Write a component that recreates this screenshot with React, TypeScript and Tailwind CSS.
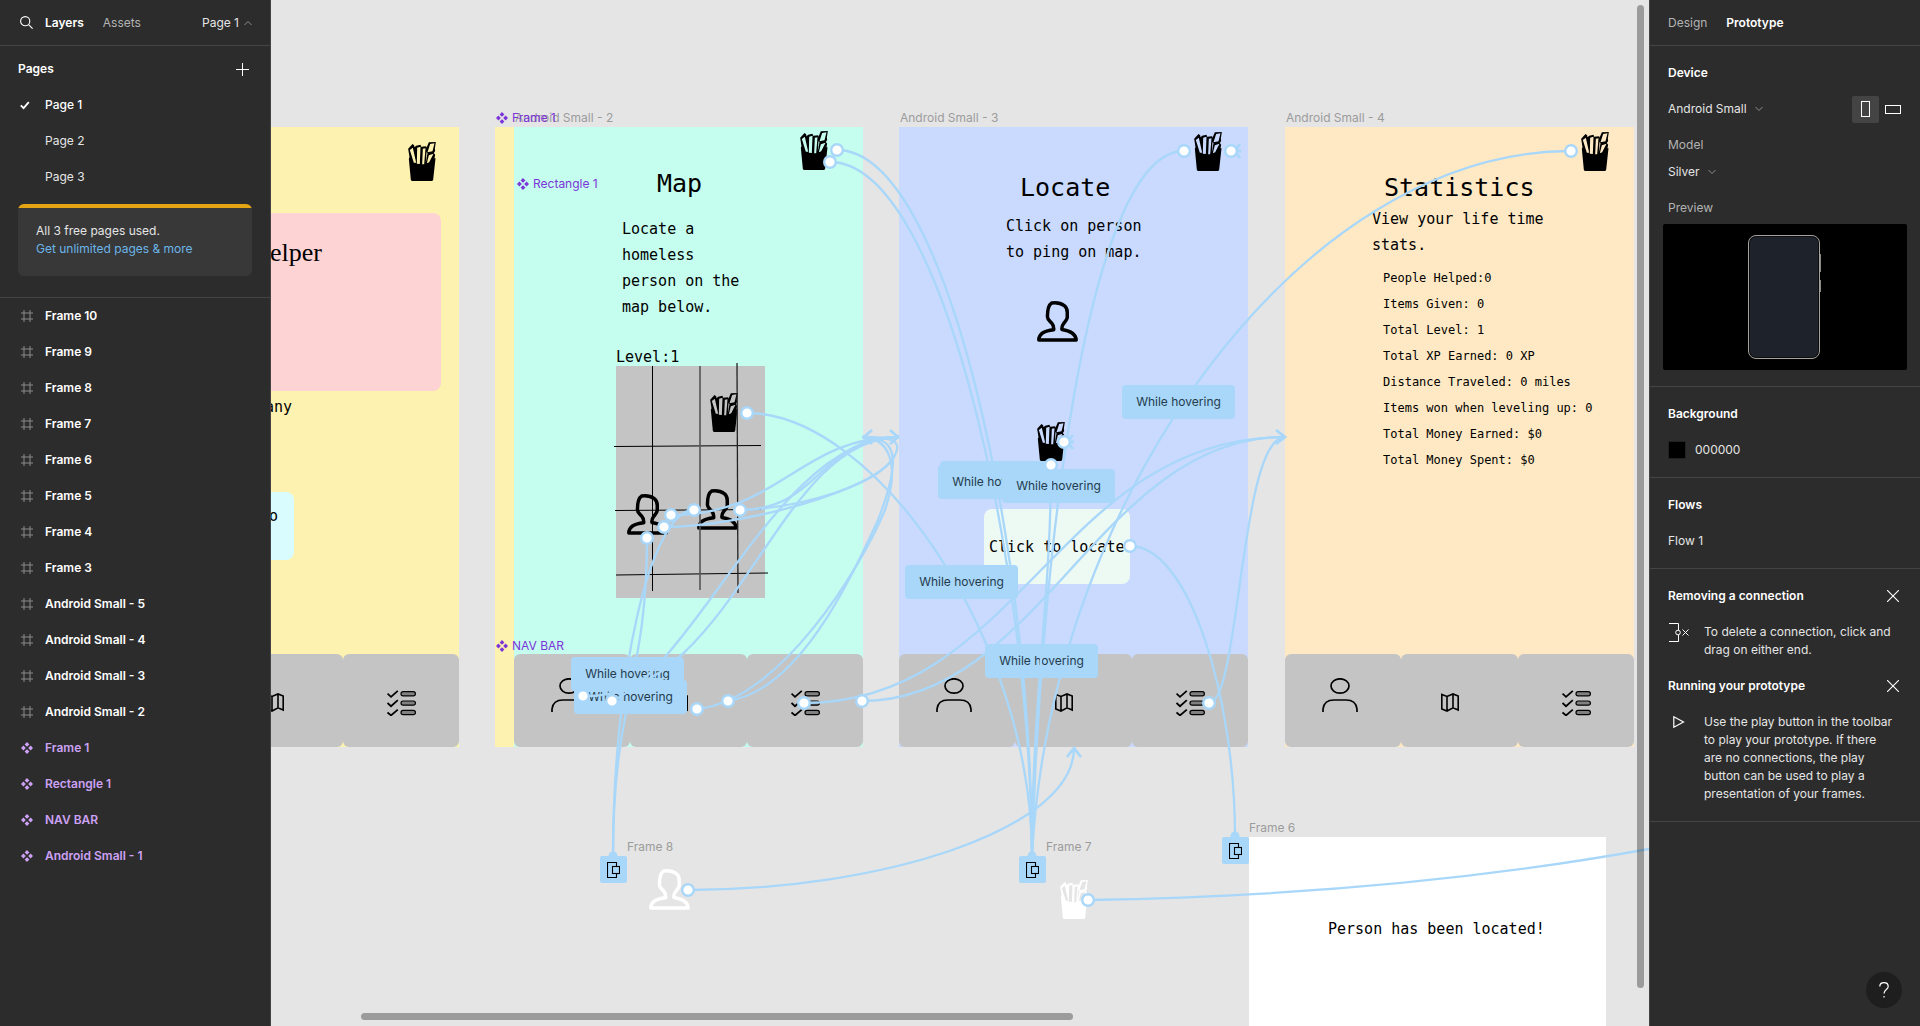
import React from "react";

const PAGES = ["Page 1", "Page 2", "Page 3"];

const LAYERS: { name: string; component?: boolean }[] = [
  { name: "Frame 10" },
  { name: "Frame 9" },
  { name: "Frame 8" },
  { name: "Frame 7" },
  { name: "Frame 6" },
  { name: "Frame 5" },
  { name: "Frame 4" },
  { name: "Frame 3" },
  { name: "Android Small - 5" },
  { name: "Android Small - 4" },
  { name: "Android Small - 3" },
  { name: "Android Small - 2" },
  { name: "Frame 1", component: true },
  { name: "Rectangle 1", component: true },
  { name: "NAV BAR", component: true },
  { name: "Android Small - 1", component: true },
];

const STATS = [
  "People Helped:0",
  "Items Given: 0",
  "Total Level: 1",
  "Total XP Earned: 0 XP",
  "Distance Traveled: 0 miles",
  "Items won when leveling up: 0",
  "Total Money Earned: $0",
  "Total Money Spent: $0",
];

/* ---------- icons ---------- */

function Chevron({ up = false }: { up?: boolean }) {
  return (
    <svg className="h-2 w-2" viewBox="0 0 8 8" fill="none" stroke="#8c8c8c" aria-hidden="true">
      <path d={up ? "M.5 6 4 2.5 7.5 6" : "M.5 2 4 5.5 7.5 2"} />
    </svg>
  );
}

function CloseIcon() {
  return (
    <svg className="h-3 w-3" viewBox="0 0 12 12" fill="none" stroke="#fff" strokeWidth="1.1" aria-hidden="true">
      <path d="M0 0 12 12M12 0 0 12" />
    </svg>
  );
}

function FrameIcon() {
  return (
    <svg className="h-3 w-3" viewBox="0 0 12 12" fill="none" stroke="#8a8a8a" aria-hidden="true">
      <path d="M3 0V12M9 0V12M0 3H12M0 9H12" />
    </svg>
  );
}

function ComponentIcon() {
  return (
    <svg className="h-3 w-3" viewBox="0 0 12 12" fill="currentColor" aria-hidden="true">
      <path d="M6 0 8.4 2.4 6 4.8 3.6 2.4ZM6 7.2 8.4 9.6 6 12 3.6 9.6ZM2.4 3.6 4.8 6 2.4 8.4 0 6ZM9.6 3.6 12 6 9.6 8.4 7.2 6Z" />
    </svg>
  );
}

function Fries({ className }: { className: string }) {
  return (
    <svg className={`h-[39px] w-7 shrink-0 ${className}`} viewBox="0 0 83 117" fill="currentColor" aria-hidden="true">
      <path
        fillRule="evenodd"
        d="M0 20 13 6 18 10 19 16 24 11 37 8 39 14 54 13 55 17 62 1 83 0 80 20 81 27 77 33 81 38 79 49 82 49 75 113Q74 117 70 117H13Q9 117 8 113L2 50 4 46ZM5 24 17 62 24 62 14 17ZM27 17 26 65 35 66 37 14ZM44 20 42 67 48 67 52 19ZM66 6 58 31 73 28 79 4ZM62 40 56 64 63 61 76 35ZM55 30 53 62 55 50 58 34Z"
      />
    </svg>
  );
}

function Bust({ className }: { className: string }) {
  return (
    <svg className={`h-[41px] w-[41px] shrink-0 ${className}`} viewBox="0 0 123 124" fill="none" stroke="currentColor" strokeWidth="10.5" strokeLinejoin="round" aria-hidden="true">
      <path d="M44 6C58 4 74 8 82 14 90 20 91 26 91 34V50C90 58 84 62 80 68 74 76 74 80 75 86 100 90 117 98 118 118H5C5 99 22 90 50 87 51 78 50 74 44 67 38 60 31 56 31 48 31 30 34 12 44 6Z" />
    </svg>
  );
}

function UserIcon() {
  return (
    <svg className="h-[34px] w-9" viewBox="0 0 36 34" fill="none" stroke="#000" strokeWidth="1.7" aria-hidden="true">
      <ellipse cx="18" cy="8" rx="9" ry="7.2" />
      <path d="M1 34V31Q2 22 12 22H24Q34 22 35 31V34" />
    </svg>
  );
}

function MapIcon() {
  return (
    <svg className="h-[19px] w-[18px]" viewBox="0 0 18 19" fill="none" stroke="#000" strokeWidth="1.6" aria-hidden="true">
      <path d="M.8 1.5 6 3.5 12 .9 17.2 3V17L12 14.8 6 18 .8 16ZM6 3.5V18M12 .9V14.8" />
    </svg>
  );
}

function ChecklistIcon() {
  return (
    <svg className="h-[26px] w-[29px]" viewBox="0 0 29 26" fill="none" stroke="#000" strokeWidth="1.8" aria-hidden="true">
      <path d="M.5 3.6 4 6.8 10.8.8M.5 13 4 16.2 10.8 10.2M.5 22.4 4 25.4 10.8 19.6" />
      <g fill="#808080" strokeWidth="1.2">
        <rect x="14" y="1.6" width="14.4" height="4.2" rx="2.1" />
        <rect x="14" y="11" width="14.4" height="4.2" rx="2.1" />
        <rect x="14" y="20.4" width="14.4" height="4.2" rx="2.1" />
      </g>
    </svg>
  );
}

/* ---------- canvas pieces ---------- */

function NavBar() {
  return (
    <div className="mt-auto grid h-[93px] grid-cols-3">
      <div className="rounded-md bg-[#c4c4c4] pt-6 pl-[37px]">
        <UserIcon />
      </div>
      <div className="rounded-md bg-[#c4c4c4] pt-[39px] pl-10">
        <MapIcon />
      </div>
      <div className="rounded-md bg-[#c4c4c4] pt-9 pl-11">
        <ChecklistIcon />
      </div>
    </div>
  );
}

function Artboard({ label, className, children }: { label: string; className: string; children: React.ReactNode }) {
  return (
    <section className="flex w-[349px] flex-col">
      <span className="h-[18px] pl-px leading-[18px] whitespace-nowrap text-[#9c9c9c]">{label}</span>
      <div className={`flex h-[620px] flex-col items-stretch text-black ${className}`}>
        {children}
        <NavBar />
      </div>
    </section>
  );
}

function ComponentLabel({ children }: { children: React.ReactNode }) {
  return (
    <span className="flex items-center gap-1 leading-[18px] whitespace-nowrap text-[#7b35d8]">
      <ComponentIcon />
      {children}
    </span>
  );
}

function Hover({ className }: { className: string }) {
  return (
    <span className={`absolute flex h-[34px] w-[113px] items-center justify-center rounded bg-[#a8d7fa] whitespace-nowrap text-[#253b4c] ${className}`}>
      While hovering
    </span>
  );
}

function OverlayBadge() {
  return (
    <span className="flex h-[27px] w-[27px] shrink-0 items-center justify-center rounded-xs bg-[#a8d7fa]">
      <svg className="h-4 w-[13px]" viewBox="0 0 13 16" fill="none" stroke="#000" strokeWidth="1.1" aria-hidden="true">
        <path d="M9.500 4.500V.5H.5V15.500H9.500V11.500" />
        <rect x="5.500" y="4.500" width="7" height="7" />
      </svg>
    </span>
  );
}

const LINES_BELOW = [
  "M837 150C950 150 1032 560 1032 856",
  "M830 162C945 162 1030 570 1032 856",
  "M747 413C875 413 1032 640 1032 856",
  "M1184 151C1085 151 1040 570 1032 856",
  "M1571 151C1300 151 1050 500 1032 856",
  "M804 703C1020 703 1060 437 1285 437",
  "M862 701C1040 701 1100 437 1285 437",
  "M1209 703C1240 703 1240 437 1285 437",
  "M1130 546C1190 546 1235 700 1235 836",
  "M688 890C880 890 1074 830 1074 748",
  "M1088 900Q1400 895 1660 847",
  "M647 538C647 680 613 700 613 856",
  "M694 510C650 510 613 680 613 856",
  "M671 515C780 515 800 437 899 437",
  "M740 510C820 510 820 437 899 437",
  "M740 510C800 508 880 485 895 455",
  "M664 527C740 527 880 490 895 455C904 438 885 437 862 437",
  "M697 709C780 700 860 570 885 510C900 465 890 438 862 437",
  "M728 701C800 690 850 580 878 520C905 450 893 438 862 437",
];

const ARROWS = [
  "M872 430 864 437 872 444M890 430 898 437 890 444M1276 430 1285 437 1276 444",
  "M1067 757 1074 748 1081 757",
  "M1236 149 1240 144M1236 151H1241M1236 153 1240 158",
  "M1069 440 1073 435M1069 442H1074M1069 444 1073 449",
];

const LINES_ABOVE = [
  "M1051 465C1051 600 1032 700 1032 856",
  "M612 701C700 660 780 437 899 437",
  "M583 696C735 700 775 437 899 437",
];

const NODES = [
  [837, 150], [830, 162], [747, 413], [671, 515], [694, 510], [740, 510], [664, 527], [647, 538],
  [583, 696], [612, 701], [697, 709], [728, 701], [804, 703], [862, 701], [1184, 151], [1231, 151],
  [1064, 442], [1051, 465], [1130, 546], [1209, 703], [1571, 151], [688, 890], [1088, 900],
];

function Artboards() {
  return (
    <div className="absolute top-[109px] left-[110px] flex gap-9">
      <Artboard label="Android Small - 1" className="bg-[#fef2b1]">
        <Fries className="mt-[15px] ml-[298px]" />
        <div className="mt-8 mr-[18px] ml-[18px] flex h-[178px] justify-end rounded-lg bg-[#fed3d3] pt-[25px] pr-[119px]">
          <h2 className="font-['Liberation_Serif',serif] text-[26px] leading-[30px]">elper</h2>
        </div>
        <p className="mt-[3px] pr-[167px] text-right font-['DejaVu_Sans_Mono',monospace] text-[15px] leading-[26px]">any</p>
        <div className="mt-[72px] ml-11 flex h-[68px] w-[140px] justify-end rounded-lg bg-[#d9fdff] pt-[11px] pr-4">
          <span className="font-['DejaVu_Sans_Mono',monospace] text-[15px] leading-[26px]">o</span>
        </div>
      </Artboard>

      <div className="flex">
        <div className="mt-[18px] h-[620px] w-[19px] bg-[#fef2b1]" />
        <Artboard label="Android Small - 2" className="bg-[#c5fdef]">
          <Fries className="mt-1 ml-[286px]" />
          <h2 className="pl-[143px] font-['DejaVu_Sans_Mono',monospace] text-[25px] leading-7">Map</h2>
          <p className="mt-[18px] ml-[108px] w-[130px] font-['DejaVu_Sans_Mono',monospace] text-[15px] leading-[26px]">
            Locate a homeless person on the map below.
          </p>
          <p className="mt-7 ml-[102px] font-['DejaVu_Sans_Mono',monospace] text-[15px] leading-[18px]">Level:1</p>
          <div className="relative ml-[102px] h-[232px] w-[149px] bg-[#c4c4c4]">
            <Fries className="absolute top-[27px] left-[94px]" />
            <Bust className="absolute top-32 left-[11px]" />
            <Bust className="absolute top-[123px] left-[81px]" />
            <svg className="absolute -top-[3px] -left-0.5 h-[236px] w-[156px]" viewBox="0 0 156 236" fill="none" stroke="#000" aria-hidden="true">
              <path d="M38.500 3V228M0 83.500 147 82.500M1 147.500 147 146.500M2 212 154 210" />
              <path d="M86 3V227" stroke="#555" strokeWidth="1.600" />
              <path d="M123 0 124 230" stroke="#222" strokeWidth="1.300" />
            </svg>
          </div>
        </Artboard>
      </div>

      <div className="flex gap-[37px]">
        <Artboard label="Android Small - 3" className="bg-[#c9dafe]">
          <Fries className="mt-[5px] ml-[295px]" />
          <h2 className="mt-0.5 pl-[121px] font-['DejaVu_Sans_Mono',monospace] text-[25px] leading-[30px]">Locate</h2>
          <p className="mt-2.5 ml-[107px] w-[150px] font-['DejaVu_Sans_Mono',monospace] text-[15px] leading-[26px]">
            Click on person to ping on map.
          </p>
          <Bust className="mt-9 ml-[138px]" />
          <Fries className="mt-20 ml-[138px]" />
          <button className="mt-12 ml-[85px] flex h-[75px] w-[146px] items-center rounded-lg bg-[#edf9f3] pl-[5px] font-['DejaVu_Sans_Mono',monospace] text-[15px] leading-[26px] whitespace-nowrap">
            Click to locate
          </button>
        </Artboard>

        <Artboard label="Android Small - 4" className="bg-[#fee9c4]">
          <Fries className="mt-[5px] ml-[296px]" />
          <h2 className="mt-0.5 pl-[99px] font-['DejaVu_Sans_Mono',monospace] text-[25px] leading-[30px]">Statistics</h2>
          <p className="mt-[3px] ml-[87px] w-[190px] font-['DejaVu_Sans_Mono',monospace] text-[15px] leading-[26px]">
            View your life time stats.
          </p>
          <ul className="mt-[7px] pl-[98px] font-['DejaVu_Sans_Mono',monospace] text-[12px] leading-[26px] whitespace-nowrap">
            {STATS.map((s) => (
              <li key={s}>{s}</li>
            ))}
          </ul>
        </Artboard>
      </div>
    </div>
  );
}

function Canvas() {
  return (
    <main className="relative min-w-0 flex-1 overflow-hidden bg-[#e5e5e5]">
      <div className="absolute inset-y-0 right-0 -left-[271px]">
        <Artboards />

        <div className="absolute top-[109px] left-[496px]">
          <ComponentLabel>Frame 1</ComponentLabel>
        </div>
        <div className="absolute top-[175px] left-[517px]">
          <ComponentLabel>Rectangle 1</ComponentLabel>
        </div>
        <div className="absolute top-[637px] left-[496px]">
          <ComponentLabel>NAV BAR</ComponentLabel>
        </div>

        <div className="absolute top-[819px] bottom-0 left-[1249px] flex w-[357px] flex-col">
          <span className="leading-[18px] text-[#9c9c9c]">Frame 6</span>
          <p className="flex-1 bg-white pt-[79px] pl-[79px] font-['DejaVu_Sans_Mono',monospace] text-[15px] leading-[26px] whitespace-nowrap text-black">
            Person has been located!
          </p>
        </div>

        <div className="absolute top-[838px] left-[627px] flex flex-col">
          <span className="leading-[18px] text-[#9c9c9c]">Frame 8</span>
          <Bust className="mt-[13px] ml-[22px] text-white" />
        </div>
        <div className="absolute top-[838px] left-[1046px] flex flex-col">
          <span className="leading-[18px] text-[#9c9c9c]">Frame 7</span>
          <Fries className="mt-6 ml-[14px] text-white" />
        </div>

        <svg className="absolute inset-0 h-full w-full" fill="none" stroke="#a8d7fa" strokeWidth="2.3" aria-hidden="true">
          {LINES_BELOW.map((d) => (
            <path key={d} d={d} />
          ))}
          <g strokeWidth="2.8">
            {ARROWS.map((d) => (
              <path key={d} d={d} />
            ))}
          </g>
        </svg>

        <Hover className="top-[657px] left-[571px]" />
        <Hover className="top-[680px] left-[574px]" />
        <Hover className="top-[385px] left-[1122px]" />
        <span className="absolute top-[461px] left-[940px] h-[34px] w-[113px] rounded bg-[#a8d7fa]" />
        <Hover className="top-[465px] left-[938px]" />
        <Hover className="top-[469px] left-[1002px]" />
        <Hover className="top-[565px] left-[905px]" />
        <Hover className="top-[644px] left-[985px]" />

        <svg className="absolute inset-0 h-full w-full" fill="none" stroke="#a8d7fa" strokeWidth="2.3" aria-hidden="true">
          {LINES_ABOVE.map((d) => (
            <path key={d} d={d} />
          ))}
          <g fill="#a8d7fa" stroke="none">
            <circle cx="613" cy="856" r="4.5" />
            <circle cx="1032" cy="856" r="4.5" />
            <circle cx="1235" cy="836" r="4.5" />
          </g>
          {NODES.map(([x, y]) => (
            <circle key={`${x}-${y}`} cx={x} cy={y} r="5.8" fill="#fff" strokeWidth="2.4" />
          ))}
        </svg>

        <div className="absolute top-[856px] left-[600px] flex gap-[392px]">
          <OverlayBadge />
          <OverlayBadge />
        </div>
        <div className="absolute top-[837px] left-[1222px] flex">
          <OverlayBadge />
        </div>
      </div>

      <div className="absolute top-[5px] right-[5px] bottom-[38px] w-[7px] rounded-full bg-black/32" />
      <div className="absolute bottom-[6px] left-[90px] h-[7px] w-[712px] rounded-full bg-[#9c9c9c]" />
    </main>
  );
}

/* ---------- panels ---------- */

function LeftPanel() {
  return (
    <aside className="flex w-[271px] shrink-0 flex-col border-r border-[#444] bg-[#2c2c2c] text-white">
      <header className="flex h-[46px] items-center border-b border-[#444] pr-[18px] pl-5">
        <button aria-label="Search" className="mr-3">
          <svg className="h-[13px] w-[13px]" viewBox="0 0 13 13" fill="none" stroke="#fff" strokeWidth="1.1" aria-hidden="true">
            <circle cx="5.2" cy="5.2" r="4.6" />
            <path d="M8.600 8.600 12.600 12.600" />
          </svg>
        </button>
        <button className="mr-[19px] font-semibold">Layers</button>
        <button className="text-[#b3b3b3]">Assets</button>
        <button className="ml-auto flex items-center gap-[5px] text-[#e5e5e5]">
          Page 1 <Chevron up />
        </button>
      </header>
      <section className="border-b border-[#444] pt-[5px] pb-[21px]">
        <div className="flex h-9 items-center justify-between pr-[21px] pl-[18px]">
          <h2 className="font-semibold">Pages</h2>
          <button aria-label="Add page">
            <svg className="h-[13px] w-[13px]" viewBox="0 0 13 13" stroke="#fff" aria-hidden="true">
              <path d="M6.500 0V13M0 6.500H13" />
            </svg>
          </button>
        </div>
        <ul>
          {PAGES.map((p, i) => (
            <li key={p}>
              <button className={`flex h-9 w-full items-center pl-5 ${i === 0 ? "font-medium text-white" : "text-[#e5e5e5]"}`}>
                <span className="w-[25px]">
                  {i === 0 && (
                    <svg className="h-[9px] w-[10px]" viewBox="0 0 10 9" fill="none" stroke="#fff" strokeWidth="1.900" aria-hidden="true">
                      <path d="M.8 4.400 3.600 7.200 8.800 1.200" />
                    </svg>
                  )}
                </span>
                {p}
              </button>
            </li>
          ))}
        </ul>
        <div className="mx-[18px] mt-[9px] overflow-hidden rounded-md bg-[#383838]">
          <div className="h-1 bg-[#e5a413]" />
          <div className="px-[18px] pt-[14px] pb-[18px] leading-[18px] text-[#e5e5e5]">
            All 3 free pages used.
            <br />
            <a href="#plans" className="text-[#6bb5e8]">
              Get unlimited pages &amp; more
            </a>
          </div>
        </div>
      </section>
      <ul>
        {LAYERS.map((l) => (
          <li key={l.name}>
            <button className={`flex h-9 w-full items-center gap-3 pl-[21px] font-semibold ${l.component ? "text-[#cda2f5]" : "text-white"}`}>
              {l.component ? <ComponentIcon /> : <FrameIcon />}
              {l.name}
            </button>
          </li>
        ))}
      </ul>
    </aside>
  );
}

function RightPanel() {
  return (
    <aside className="flex w-[271px] shrink-0 flex-col border-l border-[#444] bg-[#2c2c2c] leading-[18px] text-[#e5e5e5]">
      <header className="flex h-[46px] items-center gap-[19px] border-b border-[#444] pl-[18px]">
        <button className="text-[#b3b3b3]">Design</button>
        <button className="font-semibold text-white">Prototype</button>
      </header>
      <section className="border-b border-[#444] pt-[9px] pb-4">
        <h2 className="flex h-9 items-center pl-[18px] font-semibold text-white">Device</h2>
        <div className="flex h-9 items-center pr-[14px] pl-[18px]">
          <select aria-label="Device" className="mr-2 appearance-none field-sizing-content">
            <option>Android Small</option>
          </select>
          <Chevron />
          <button aria-label="Portrait" className="ml-auto flex h-[27px] w-[27px] items-center justify-center rounded-xs bg-[#444]">
            <span className="h-4 w-[9px] border border-white" />
          </button>
          <button aria-label="Landscape" className="flex h-[27px] w-[27px] items-center justify-center">
            <span className="h-[9px] w-4 border border-white" />
          </button>
        </div>
        <label htmlFor="model" className="flex h-9 items-center pl-[18px] text-[#b3b3b3]">
          Model
        </label>
        <div className="flex h-[18px] items-center pl-[18px]">
          <select id="model" className="mr-2 appearance-none field-sizing-content">
            <option>Silver</option>
          </select>
          <Chevron />
        </div>
        <h3 className="mt-[18px] pl-[18px] text-[#b3b3b3]">Preview</h3>
        <div className="mx-[13px] mt-[7px] flex h-[146px] items-center justify-center rounded-xs bg-black pr-0.5">
          <div className="relative h-[124px] w-[72px] rounded-lg border border-[#a5a299] bg-[#0b0d10] p-px">
            <div className="h-full rounded-md bg-[#1e222a]" />
            <div className="absolute top-[18px] -right-[2px] h-[18px] w-px bg-[#8c8a84]" />
            <div className="absolute top-11 -right-[2px] h-3 w-px bg-[#8c8a84]" />
          </div>
        </div>
      </section>
      <section className="border-b border-[#444] py-[9px]">
        <h2 className="flex h-9 items-center pl-[18px] font-semibold text-white">Background</h2>
        <div className="flex h-9 items-center gap-[9px] pl-[18px]">
          <span className="h-[18px] w-[18px] border border-[#222] bg-black" />
          <input aria-label="Background colour" defaultValue="000000" className="w-20 bg-transparent" />
        </div>
      </section>
      <section className="border-b border-[#444] py-[9px]">
        <h2 className="flex h-9 items-center pl-[18px] font-semibold text-white">Flows</h2>
        <button className="flex h-9 w-full items-center pl-[18px]">Flow 1</button>
      </section>
      <section className="border-b border-[#444] pt-[9px] pb-[18px]">
        <div className="flex h-9 items-center justify-between pr-[21px] pl-[18px]">
          <h2 className="font-semibold text-white">Removing a connection</h2>
          <button aria-label="Dismiss removing a connection">
            <CloseIcon />
          </button>
        </div>
        <div className="flex pt-[9px] pb-[9px] pl-[18px]">
          <svg className="mr-[15px] h-5 w-[21px] shrink-0" viewBox="0 0 21 20" fill="none" stroke="#fff" aria-hidden="true">
            <path d="M1 .5H10.500V7M10.500 12V18.500H1M14.500 6.500 20.500 12.500M20.500 6.500 14.500 12.500" />
            <circle cx="10" cy="9.500" r="2.300" />
          </svg>
          <p>
            To delete a connection, click and
            <br />
            drag on either end.
          </p>
        </div>
        <div className="flex h-9 items-center justify-between pr-[21px] pl-[18px]">
          <h2 className="font-semibold text-white">Running your prototype</h2>
          <button aria-label="Dismiss running your prototype">
            <CloseIcon />
          </button>
        </div>
        <div className="flex pt-[9px] pl-[18px]">
          <svg className="mt-[3px] mr-[19px] ml-[5px] h-3 w-3 shrink-0" viewBox="0 0 12 12" fill="none" stroke="#fff" strokeWidth="1.200" aria-hidden="true">
            <path d="M.8 .8 10.500 6 .8 11.200Z" />
          </svg>
          <p>
            Use the play button in the toolbar
            <br />
            to play your prototype. If there
            <br />
            are no connections, the play
            <br />
            button can be used to play a
            <br />
            presentation of your frames.
          </p>
        </div>
      </section>
      <button aria-label="Help" className="mt-auto mr-[18px] mb-[18px] flex h-9 w-9 items-center justify-center self-end rounded-full bg-[#1e1e1e]">
        <svg className="h-4 w-[10px]" viewBox="0 0 10 16" fill="none" stroke="#fff" strokeWidth="1.200" aria-hidden="true">
          <path d="M.8 4.500C.8-.6 9.200-.6 9.200 4.500 9.200 7.500 5 7.500 5 11.500M5 14V15.400" />
        </svg>
      </button>
    </aside>
  );
}

export default function App() {
  return (
    <div className="flex h-screen overflow-hidden font-['Inter',sans-serif] text-[12px]">
      <LeftPanel />
      <Canvas />
      <RightPanel />
    </div>
  );
}
